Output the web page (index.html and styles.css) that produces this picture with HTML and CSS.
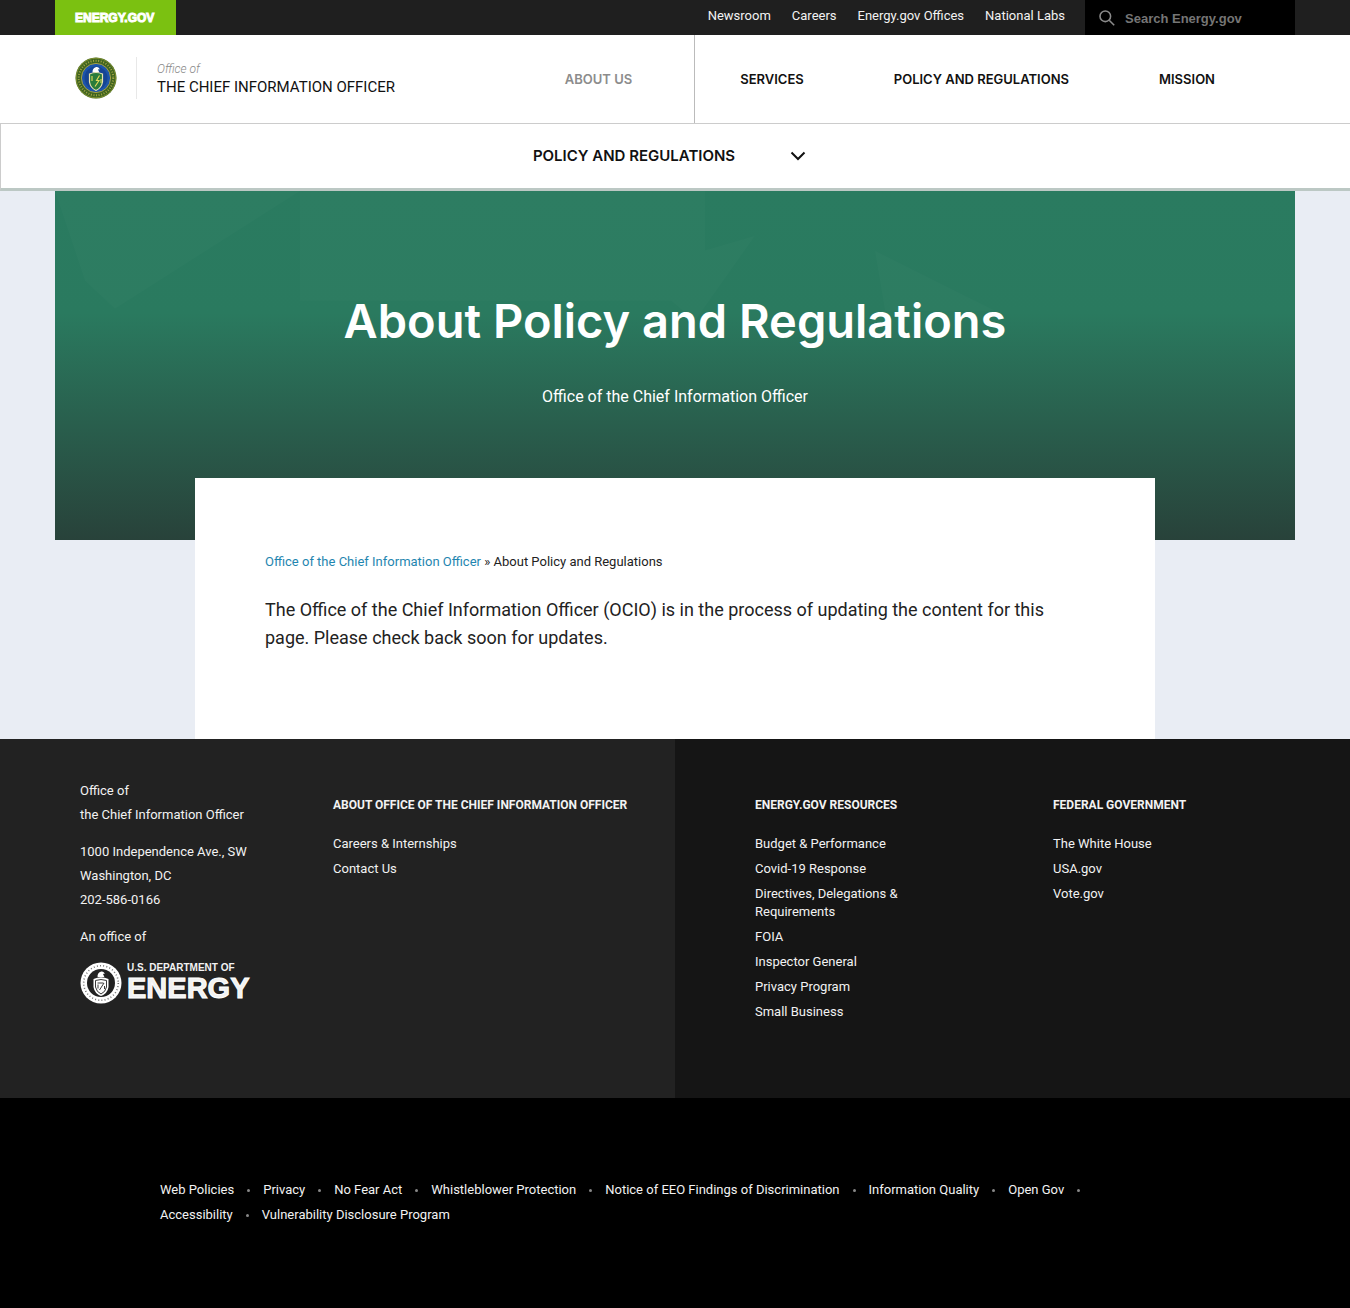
FILE: index.html
```html
<!DOCTYPE html>
<html lang="en">
<head>
<meta charset="utf-8">
<meta name="viewport" content="width=device-width, initial-scale=1">
<title>About Policy and Regulations | Department of Energy</title>
<link rel="stylesheet" href="styles.css">
</head>
<body>
<header>
  <div class="topbar">
    <div class="container topbar-row">
      <a class="brand" href="#">ENERGY.GOV</a>
      <nav class="utility" aria-label="Utility">
        <a href="#">Newsroom</a>
        <a href="#">Careers</a>
        <a href="#">Energy.gov Offices</a>
        <a href="#">National Labs</a>
      </nav>
      <form class="search" role="search">
        <svg width="16" height="16" viewBox="0 0 16 16" fill="none" stroke="#8a8a8a" stroke-width="1.600" aria-hidden="true"><circle cx="6.300" cy="6.300" r="5.300"/><path d="M10.200 10.200 15.200 15.200"/></svg>
        <input type="search" aria-label="Search Energy.gov" placeholder="Search Energy.gov">
      </form>
    </div>
  </div>

  <div class="masthead">
    <div class="container masthead-row">
      <a class="office" href="#">
        <svg width="42" height="42" viewBox="0 0 42 42" aria-hidden="true">
          <circle cx="21" cy="21" r="20.500" fill="#3f6420"/>
          <circle cx="21" cy="21" r="19.800" fill="none" stroke="#8f9a34" stroke-width=".8"/>
          <circle cx="21" cy="21" r="17.300" fill="none" stroke="#a3a444" stroke-width="2" stroke-dasharray="1 1.600"/>
          <circle cx="21" cy="21" r="14.600" fill="#1d55ab" stroke="#b3a83c" stroke-width=".9"/>
          <circle cx="21" cy="21" r="11.500" fill="#164594"/>
          <path d="M17.600 15.500c-.4-2.600.8-4.600 3-5.300 2-.6 4 .5 4 2.300l-1.700-.3 1.500 3.300z" fill="#fff"/>
          <path d="M14.500 17q6.500-3 13 0v8q-1 6-6.500 8.500-5.500-2.500-6.500-8.500z" fill="#2a7c3b" stroke="#e8e3b0" stroke-width="1.200"/>
          <path d="M17 19v5M24.500 18.500l-3 5h2.500l-4 6M26 22v4" fill="none" stroke="#e6d95a" stroke-width="1.100"/>
        </svg>
        <span class="office-name"><em>Office of</em><span>THE CHIEF INFORMATION OFFICER</span></span>
      </a>
      <nav class="primary" aria-label="Primary">
        <a class="current" href="#">ABOUT US</a>
        <a href="#">SERVICES</a>
        <a href="#">POLICY AND REGULATIONS</a>
        <a href="#">MISSION</a>
      </nav>
    </div>
  </div>

  <div class="subnav">
    <button type="button" class="subnav-toggle" aria-expanded="false">
      <span>POLICY AND REGULATIONS</span>
      <svg width="16" height="10" viewBox="0 0 16 10" fill="none" stroke="#111" stroke-width="2" aria-hidden="true"><path d="M1.500 1.500 8 8 14.500 1.500"/></svg>
    </button>
  </div>
</header>

<main>
  <section class="container hero">
    <svg class="facets" viewBox="0 0 1240 350" preserveAspectRatio="none" aria-hidden="true">
      <path d="M0 0H245L60 118 30 90Z"/><path d="M245 0H650V110H245Z"/><path d="M580 80 700 45 640 130Z"/><path d="M820 60 940 120 830 120Z"/>
    </svg>
    <h1>About Policy and Regulations</h1>
    <p>Office of the Chief Information Officer</p>
  </section>
  <article class="card">
    <nav class="breadcrumb" aria-label="Breadcrumb"><a href="#">Office of the Chief Information Officer</a> » About Policy and Regulations</nav>
    <p class="body-text">The Office of the Chief Information Officer (OCIO) is in the process of updating the content for this page. Please check back soon for updates.</p>
  </article>
</main>

<footer>
  <div class="footer-main">
    <div class="footer-half about">
      <address>
        <p>Office of<br>the Chief Information Officer</p>
        <p>1000 Independence Ave., SW<br>Washington, DC<br>202-586-0166</p>
        <p>An office of</p>
        <a class="doe" href="#">
          <svg width="42" height="42" viewBox="0 0 42 42" aria-hidden="true">
            <circle cx="21" cy="21" r="20.500" fill="#fff"/>
            <circle cx="21" cy="21" r="17.300" fill="none" stroke="#777" stroke-width="1.600" stroke-dasharray="1 2.200"/>
            <circle cx="21" cy="21" r="14" fill="#222"/>
            <path d="M17.600 15c-.4-2.600.8-4.600 3-5.300 2-.6 4 .5 4 2.300l-1.700-.3 1.500 3.300z" fill="#fff"/>
            <path d="M13.500 17q7.500-3.500 15 0v8q-1 6.500-7.500 9-6.500-2.500-7.500-9z" fill="#fff"/>
            <path d="M15.500 18.500q5.500-2 11 0v6.500q-1 5-5.500 7-4.500-2-5.500-7zM17.500 21h6M18 22.500v4M24 21l-4.500 7M24.500 24v3" fill="none" stroke="#222" stroke-width=".9"/>
          </svg>
          <span class="doe-text"><small>U.S. DEPARTMENT OF</small><strong>ENERGY</strong></span>
        </a>
      </address>
      <section>
        <h2>ABOUT OFFICE OF THE CHIEF INFORMATION OFFICER</h2>
        <ul>
          <li><a href="#">Careers &amp; Internships</a></li>
          <li><a href="#">Contact Us</a></li>
        </ul>
      </section>
    </div>
    <div class="footer-half resources">
      <section>
        <h2>ENERGY.GOV RESOURCES</h2>
        <ul>
          <li><a href="#">Budget &amp; Performance</a></li>
          <li><a href="#">Covid-19 Response</a></li>
          <li><a href="#">Directives, Delegations &amp; Requirements</a></li>
          <li><a href="#">FOIA</a></li>
          <li><a href="#">Inspector General</a></li>
          <li><a href="#">Privacy Program</a></li>
          <li><a href="#">Small Business</a></li>
        </ul>
      </section>
      <section>
        <h2>FEDERAL GOVERNMENT</h2>
        <ul>
          <li><a href="#">The White House</a></li>
          <li><a href="#">USA.gov</a></li>
          <li><a href="#">Vote.gov</a></li>
        </ul>
      </section>
    </div>
  </div>
  <div class="footer-legal">
    <ul>
      <li><a href="#">Web Policies</a></li>
      <li><a href="#">Privacy</a></li>
      <li><a href="#">No Fear Act</a></li>
      <li><a href="#">Whistleblower Protection</a></li>
      <li><a href="#">Notice of EEO Findings of Discrimination</a></li>
      <li><a href="#">Information Quality</a></li>
      <li><a href="#">Open Gov</a></li>
      <li><a href="#">Accessibility</a></li>
      <li><a href="#">Vulnerability Disclosure Program</a></li>
    </ul>
  </div>
</footer>
</body>
</html>
```
FILE: styles.css
```css
* { box-sizing: border-box; }

body {
  margin: 0;
  background: #e9edf4;
  color: #222;
  font: 13px/18px Roboto, "Liberation Sans", sans-serif;
}

a { color: inherit; text-decoration: none; }
ul { list-style: none; margin: 0; padding: 0; }
h1, h2, p { margin: 0; }

.container { max-width: 1240px; margin: 0 auto; }

/* Top bar */
.topbar { background: #1f1f1f; }
.topbar-row { display: flex; align-items: stretch; height: 35px; }
.brand {
  padding: 0 22px 0 20px;
  margin-right: auto;
  background: #7bc111;
  color: #fff;
  font: bold 12px/36px "Liberation Sans", sans-serif;
  -webkit-text-stroke: 1px #fff;
}
.utility { display: flex; gap: 21px; padding-right: 20px; color: #f2f2f2; line-height: 32px; }
.search { display: flex; align-items: center; gap: 10px; width: 210px; padding: 0 14px; background: #000; }
.search svg { flex: none; }
.search input {
  flex: 1;
  min-width: 0;
  padding: 2px 0 0;
  border: 0;
  background: none;
  color: #fff;
  font: bold 13px/18px "Liberation Sans", sans-serif;
}
.search input::placeholder { color: #757575; opacity: 1; }

/* Masthead */
.masthead { background: #fff; }
.masthead-row { display: flex; justify-content: space-between; padding: 0 35px 0 20px; }
.office { display: flex; align-items: center; gap: 19px; padding-bottom: 3px; color: #111; }
.office-name { display: flex; flex-direction: column; justify-content: center; height: 42px; padding-left: 20px; border-left: 1px solid #e8e8e8; font-size: 15px; line-height: 18px; }
.office-name em { color: #888; font-size: 12px; font-weight: 300; }
.primary { display: flex; color: #111; font-family: Inter, sans-serif; font-weight: 600; line-height: 88px; }
.primary a { padding: 0 45px; }
.primary .current { padding-right: 62px; border-right: 1px solid #bbb; color: #8c8c8c; }

.subnav { background: #fff; border: solid #ccc; border-width: 1px 0 3px 1px; border-bottom-color: #bcc8c4; }
.subnav-toggle {
  display: flex;
  justify-content: center;
  align-items: center;
  gap: 55px;
  width: 100%;
  height: 64px;
  padding: 0 12px 0 0;
  border: 0;
  background: none;
  color: #111;
  font: 600 15px/20px Inter, sans-serif;
}

/* Hero and content */
.hero {
  position: relative;
  padding: 100px 20px 133px;
  background: linear-gradient(#2a7b60 0, #2a7a5f 35%, #28423a 100%);
  color: #fff;
  text-align: center;
}
.facets { position: absolute; inset: 0; width: 100%; height: 100%; fill: #fff; opacity: .012; }
.hero h1 { margin-bottom: 36px; font: 600 47px/60px Inter, sans-serif; }
.hero p { font-size: 16px; line-height: 20px; }
.card { position: relative; max-width: 960px; margin: -62px auto 0; padding: 75px 70px 87px; background: #fff; }
.breadcrumb a { color: #1f86b0; }
.body-text { margin-top: 25px; font-size: 18px; line-height: 28px; }

/* Footer */
footer { color: #f2f2f2; }
.footer-main { display: grid; grid-template-columns: 1fr 1fr; }
.footer-half { display: grid; padding: 40px 40px 77px 80px; }
.about { grid-template-columns: 173px 1fr; column-gap: 80px; background: #222; }
.resources { grid-template-columns: 198px 1fr; column-gap: 100px; background: #151515; }
address { font-style: normal; line-height: 24px; white-space: nowrap; }
address p { margin-bottom: 13px; }
.doe { display: flex; gap: 5px; }
.doe svg { flex: none; }
.doe-text { display: flex; flex-direction: column; font-family: "Liberation Sans", sans-serif; font-weight: bold; }
.doe small { font-size: 10px; line-height: 12px; }
.doe strong { font-size: 29px; line-height: 28px; -webkit-text-stroke: 1px #fff; }
.footer-half section { padding-top: 17px; }
.footer-half h2 { margin-bottom: 21px; font-size: 12px; line-height: 18px; white-space: nowrap; }
.footer-half ul { display: flex; flex-direction: column; gap: 7px; }

.footer-legal { padding: 83px 200px 84px 160px; background: #000; }
.footer-legal ul { display: flex; flex-wrap: wrap; row-gap: 7px; }
.footer-legal li { display: flex; align-items: center; }
.footer-legal li:not(:last-child)::after { content: ""; width: 3px; height: 3px; margin: 0 13px; border-radius: 50%; background: #888; }
```
